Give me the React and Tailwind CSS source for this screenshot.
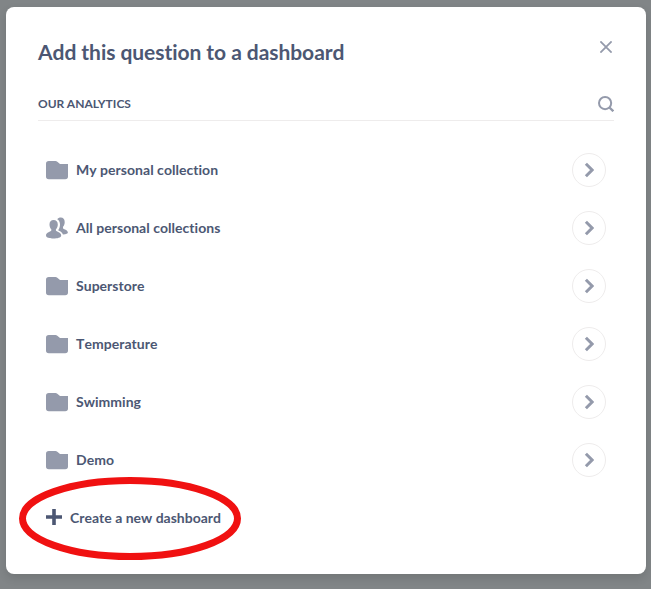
const collections = [
  { name: "My personal collection", icon: "folder" },
  { name: "All personal collections", icon: "group" },
  { name: "Superstore", icon: "folder" },
  { name: "Temperature", icon: "folder" },
  { name: "Swimming", icon: "folder" },
  { name: "Demo", icon: "folder" },
];

function FolderIcon() {
  return (
    <svg width="22" height="22" viewBox="0 0 22 22" fill="#949aab">
      <path d="M0 4.8A2.8 2.8 0 0 1 2.8 2H9.5Q10.5 2 11.3 2.7L14 5H22V17.5A2.8 2.8 0 0 1 19.2 20.3H2.8A2.8 2.8 0 0 1 0 17.5Z" />
    </svg>
  );
}

function GroupIcon() {
  return (
    <svg width="22" height="22" viewBox="0 0 22 22" fill="#949aab">
      <path d="M7.6 2.9C10.2 2.9 11.8 4.6 11.8 7.4C11.8 9.6 11 11.2 9.9 12.2V13.6C10.4 14.7 15.2 15.2 15.2 18.6C15.2 20.8 11 21.6 7.6 21.6C4 21.6 0 20.8 0 18.6C0 15.2 5 14.7 5.3 13.6V12.2C4.2 11.2 3.5 9.6 3.5 7.4C3.5 4.6 5 2.9 7.6 2.9Z" />
      <path d="M11.2 2.3C12 1 13.3 .5 14.8 .5C17.2 .5 18.7 2.2 18.7 5C18.7 7.2 18 8.8 17 9.8V11.3C17.6 12.4 21.9 12.9 21.9 15.6C21.9 16.7 20.4 17.3 17 17.5C16.1 15.1 14 14.1 12.1 13.2C13.4 11.6 14 9.6 14 7.4C14 5 12.9 3.2 11.2 2.3Z" />
    </svg>
  );
}

function CollectionRow({ name, icon }) {
  return (
    <li className="flex h-[58px] items-center px-2">
      {icon === "group" ? <GroupIcon /> : <FolderIcon />}
      <span className="ml-2 text-sm font-bold tracking-[0.03px]">{name}</span>
      <button className="ml-auto flex size-[34px] items-center justify-center rounded-full border border-[#eeecec]">
        <svg width="10" height="16" viewBox="0 0 10 16" fill="none" stroke="#949aab" strokeWidth="3">
          <path d="M1.9 1.8L8.1 8L1.9 14.2" />
        </svg>
      </button>
    </li>
  );
}

export default function App() {
  return (
    <div className="h-[589px] w-[651px] overflow-hidden bg-[#818587] pt-[7px] pl-[6px] font-['Lato',sans-serif] text-[#4c5773] [font-kerning:none] [font-variant-ligatures:none]">
      <main className="relative h-[567px] w-[640px] rounded-lg bg-white px-8 shadow-[0_4px_10px_rgba(0,0,0,0.12)]">
        <header className="flex h-[81px] items-center justify-between pt-[9px]">
          <h1 className="text-[21px] leading-8 font-bold tracking-[-0.05px]">Add this question to a dashboard</h1>
          <button className="mr-[2px] mb-[10px]">
            <svg width="12" height="12" viewBox="0 0 12 12" fill="none" stroke="#949aab" strokeWidth="1.8">
              <path d="M.4 .4L11.6 11.6M11.6 .4L.4 11.6" />
            </svg>
          </button>
        </header>
        <div className="flex h-[33px] items-center justify-between border-b border-[#eeecec]">
          <h2 className="text-xs font-bold [font-kerning:normal]">OUR ANALYTICS</h2>
          <svg width="16" height="16" viewBox="0 0 16 16" fill="none" stroke="#949aab" strokeWidth="2">
            <circle cx="7.1" cy="7.1" r="6.1" />
            <path d="M11.2 11.2L15.3 15.3" strokeWidth="2.3" />
          </svg>
        </div>
        <ul className="pt-5">
          {collections.map((item) => (
            <CollectionRow key={item.name} {...item} />
          ))}
        </ul>
        <button className="flex h-[58px] items-center pl-2">
          <svg width="16" height="16" viewBox="0 0 16 16" fill="#4c5773" className="mb-[2px]">
            <path d="M6.2 0H9.8V6.2H16V9.8H9.8V16H6.2V9.8H0V6.2H6.2Z" />
          </svg>
          <span className="ml-2 text-sm font-bold">Create a new dashboard</span>
        </button>
        <svg className="pointer-events-none absolute top-[470px] left-[13px]" width="222" height="83" viewBox="0 0 222 83" fill="none">
          <ellipse cx="111" cy="41.5" rx="107.5" ry="38" stroke="#f01111" strokeWidth="7" />
        </svg>
      </main>
    </div>
  );
}
